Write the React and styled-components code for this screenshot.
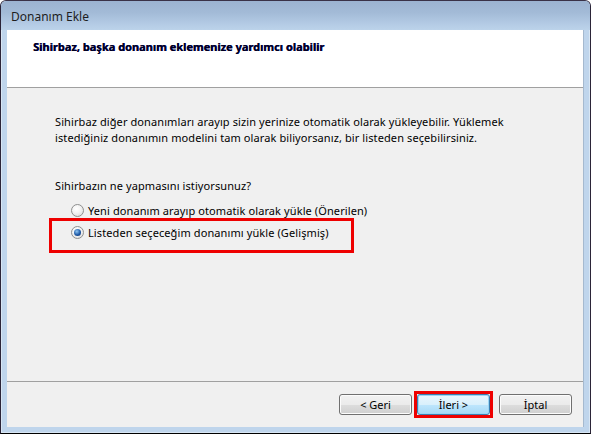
import styled, { createGlobalStyle } from 'styled-components';

const GlobalStyle = createGlobalStyle`
  html, body {
    margin: 0;
    padding: 0;
    background: #ffffff;
  }
  body {
    font-family: "Noto Sans", "Open Sans", sans-serif;
    font-size: 11px;
    letter-spacing: 0.1px;
    color: #000000;
  }
`;

export default function App() {
  return (
    <>
      <GlobalStyle />
      <Window>
        <TitleBar>
          <Title>Donanım Ekle</Title>
        </TitleBar>
        <Client>
          <Header>
            <HeaderText>Sihirbaz, başka donanım eklemenize yardımcı olabilir</HeaderText>
          </Header>
          <Content>
            <Paragraph>
              Sihirbaz diğer donanımları arayıp sizin yerinize otomatik olarak yükleyebilir. Yüklemek
              <br />
              istediğiniz donanımın modelini tam olarak biliyorsanız, bir listeden seçebilirsiniz.
            </Paragraph>
            <Question>Sihirbazın ne yapmasını istiyorsunuz?</Question>
            <Options>
              <Option>
                <Radio />
                <span>Yeni donanım arayıp otomatik olarak yükle (Önerilen)</span>
              </Option>
              <Highlight>
                <Option>
                  <Radio checked />
                  <span>Listeden seçeceğim donanımı yükle (Gelişmiş)</span>
                </Option>
              </Highlight>
            </Options>
          </Content>
          <Footer>
            <Button>&lt; Geri</Button>
            <Marked>
              <Button primary>İleri &gt;</Button>
            </Marked>
            <Button>İptal</Button>
          </Footer>
        </Client>
      </Window>
    </>
  );
}

const Window = styled.div`
  box-sizing: border-box;
  width: 591px;
  height: 434px;
  display: flex;
  flex-direction: column;
  background: #bfd5ec;
  border: 1px solid #2b2438;
  border-top-color: #3a3247;
  border-radius: 6px 6px 0 0;
  padding: 0 6px 6px 6px;
  border-bottom: 1px solid #000000;
  box-shadow: inset 0 0 0 1px #d8e6f4;
`;

const TitleBar = styled.div`
  height: 29px;
  margin: 0 -6px;
  padding: 0 10px;
  display: flex;
  align-items: center;
  background: linear-gradient(to bottom, #9cb3d1 0%, #a3bbd7 40%, #b4cbe5 80%, #bcd3ea 100%);
  border-radius: 5px 5px 0 0;
`;

const Title = styled.span`
  font-size: 12px;
  letter-spacing: 0;
  color: #1e1e1e;
  padding-top: 2px;
`;

const Client = styled.div`
  flex: 1;
  display: flex;
  flex-direction: column;
  background: #f0f0f0;
  border-right: 1px solid #a5b9cf;
`;

const Header = styled.div`
  height: 58px;
  background: #ffffff;
  border-bottom: 1px solid #a0a0a0;
  padding: 9px 0 0 26px;
  box-sizing: border-box;
`;

const HeaderText = styled.div`
  font-weight: 700;
  font-size: 11px;
  letter-spacing: 0;
  color: #000020;
  text-shadow: 0.4px 0 0 #000080;
`;

const Content = styled.div`
  flex: 1;
  padding: 26px 0 0 48px;
  border-bottom: 1px solid #a0a0a0;
`;

const Paragraph = styled.p`
  margin: 0;
  line-height: 16px;
`;

const Question = styled.p`
  margin: 32px 0 0 0;
  line-height: 16px;
`;

const Options = styled.div`
  margin-top: 5px;
  display: flex;
  flex-direction: column;
`;

const Option = styled.label`
  display: flex;
  align-items: center;
  gap: 4px;
  height: 22px;
  padding-left: 16px;
`;

const Highlight = styled.div`
  box-sizing: border-box;
  width: 305px;
  height: 35px;
  margin: -3px 0 0 -6px;
  padding: 0 0 0 3px;
  border: 3px solid #ee0000;
  display: flex;
  align-items: flex-start;
`;

const Radio = styled.span`
  box-sizing: border-box;
  width: 13px;
  height: 13px;
  border-radius: 50%;
  border: 1px solid #8e8f8f;
  background: radial-gradient(circle at 40% 35%, #ffffff 0%, #f4f4f4 40%, #d6d6d6 100%);
  display: flex;
  align-items: center;
  justify-content: center;
  &::after {
    content: '';
    display: ${(props) => (props.checked ? 'block' : 'none')};
    width: 7px;
    height: 7px;
    border-radius: 50%;
    background: radial-gradient(circle at 40% 35%, #8fc5f2 0%, #1e5aa7 55%, #0d2a63 100%);
  }
`;

const Footer = styled.div`
  height: 45px;
  display: flex;
  align-items: center;
  justify-content: flex-end;
  padding-right: 11px;
`;

const Marked = styled.div`
  box-sizing: border-box;
  border: 3px solid #ee0000;
  margin: 0 6px 0 2px;
  display: flex;
`;

const Button = styled.button`
  box-sizing: border-box;
  width: 73px;
  height: 21px;
  font-family: "Noto Sans", "Open Sans", sans-serif;
  font-size: 11px;
  color: #000000;
  padding: 0;
  border-radius: 3px;
  border: 1px solid ${(props) => (props.primary ? '#3c7fb1' : '#707070')};
  background: ${(props) =>
    props.primary
      ? 'linear-gradient(to bottom, #eaf6fd 0%, #d9f0fc 50%, #bee6fd 51%, #a7d9f5 100%)'
      : 'linear-gradient(to bottom, #f2f2f2 0%, #ebebeb 50%, #dddddd 51%, #cfcfcf 100%)'};
  box-shadow: inset 0 0 0 1px ${(props) => (props.primary ? '#9cd6f5' : '#fcfcfc')};
`;
